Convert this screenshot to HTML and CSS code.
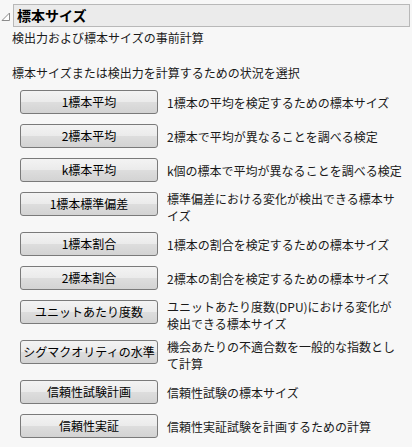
FILE: index.html
```html
<!DOCTYPE html>
<html lang="ja">
<head>
  <meta charset="UTF-8">
  <title>標本サイズ</title>
  <meta name="viewport" content="width=device-width, initial-scale=1.0">
  <link rel="stylesheet" href="styles.css">
</head>
<body>

  <div class="outline-head">
    <svg class="disclosure" width="10" height="10" viewBox="0 0 10 10">
      <polygon points="8.5,1 8.5,8.5 1,8.5" fill="#ffffff" stroke="#8c8c8c" stroke-width="1"/>
    </svg>
    <div class="outline-title">標本サイズ</div>
  </div>

  <div class="outline-body">
    <p class="intro">検出力および標本サイズの事前計算</p>
    <p class="prompt">標本サイズまたは検出力を計算するための状況を選択</p>

    <div class="choices">
      <div class="choice">
        <button>1標本平均</button>
        <div class="desc">1標本の平均を検定するための標本サイズ</div>
      </div>
      <div class="choice">
        <button>2標本平均</button>
        <div class="desc">2標本で平均が異なることを調べる検定</div>
      </div>
      <div class="choice">
        <button>k標本平均</button>
        <div class="desc">k個の標本で平均が異なることを調べる検定</div>
      </div>
      <div class="choice">
        <button>1標本標準偏差</button>
        <div class="desc">標準偏差における変化が検出できる標本サ<br>イズ</div>
      </div>
      <div class="choice">
        <button>1標本割合</button>
        <div class="desc">1標本の割合を検定するための標本サイズ</div>
      </div>
      <div class="choice">
        <button>2標本割合</button>
        <div class="desc">2標本の割合を検定するための標本サイズ</div>
      </div>
      <div class="choice">
        <button>ユニットあたり度数</button>
        <div class="desc">ユニットあたり度数(DPU)における変化が<br>検出できる標本サイズ</div>
      </div>
      <div class="choice">
        <button>シグマクオリティの水準</button>
        <div class="desc">機会あたりの不適合数を一般的な指数とし<br>て計算</div>
      </div>
      <div class="choice">
        <button>信頼性試験計画</button>
        <div class="desc">信頼性試験の標本サイズ</div>
      </div>
      <div class="choice">
        <button>信頼性実証</button>
        <div class="desc">信頼性実証試験を計画するための計算</div>
      </div>
    </div>
  </div>

</body>
</html>
```

FILE: styles.css
```css
* {
  box-sizing: border-box;
}

body {
  margin: 0;
  padding: 0;
  background: #f7f7f7;
  color: #1a1a1a;
  font-family: "Noto Sans CJK JP", "Noto Sans", sans-serif;
  font-size: 12px;
  line-height: 17px;
}

.outline-head {
  display: flex;
  align-items: center;
  margin-top: 4px;
  padding-left: 1px;
}

.disclosure {
  flex: none;
  margin-top: 2px;
}

.outline-title {
  width: 397px;
  height: 23px;
  margin-left: 2px;
  padding: 0 3px;
  background: #ebebeb;
  border: 1px solid #b8b8b8;
  font-size: 14px;
  font-weight: bold;
  line-height: 20px;
  color: #000;
}

.outline-body {
  padding-left: 12px;
}

.intro {
  margin: 2px 0 0;
}

.prompt {
  margin: 18px 0 0;
}

.choices {
  margin-top: 4px;
  padding-left: 8px;
}

.choice {
  display: flex;
  align-items: center;
  min-height: 34px;
}

.choice button {
  flex: none;
  align-self: flex-start;
  width: 138px;
  height: 24px;
  margin: 5px 0;
  padding: 0;
  border: 1px solid #7a7a7a;
  border-radius: 3px;
  background: linear-gradient(#f3f3f3 0%, #ebebeb 48%, #dddddd 52%, #d3d3d3 100%);
  font-family: inherit;
  font-size: 12px;
  line-height: 20px;
  color: #000;
  white-space: nowrap;
}

.desc {
  margin-left: 9px;
  padding: 3px 0;
  white-space: nowrap;
}
```
